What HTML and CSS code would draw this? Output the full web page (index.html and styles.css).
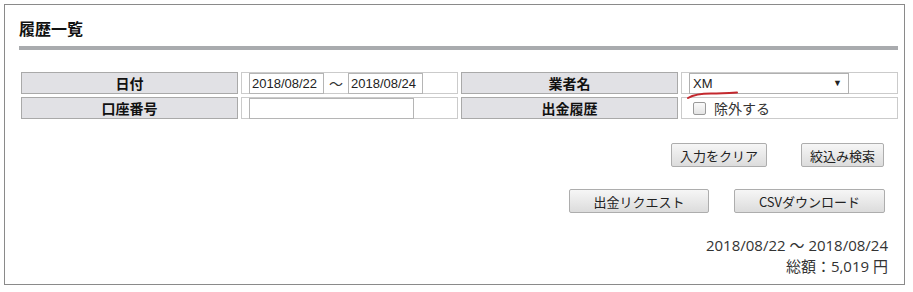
FILE: index.html
```html
<!DOCTYPE html>
<html lang="ja">
<head>
  <meta charset="UTF-8">
  <title>履歴一覧</title>
  <link rel="stylesheet" href="styles.css">
</head>
<body>

<div class="panel">
  <h2 class="panel-title">履歴一覧</h2>
  <div class="title-bar"></div>

  <!-- 検索条件 -->
  <div class="search-grid">
    <div class="label-cell">日付</div>
    <div class="value-cell">
      <input type="text" class="date-input" value="2018/08/22">
      <span class="tilde">～</span>
      <input type="text" class="date-input" value="2018/08/24">
    </div>
    <div class="label-cell">業者名</div>
    <div class="value-cell select-cell">
      <div class="select-box">
        <span>XM</span>
        <span class="arrow">▼</span>
      </div>
      <svg class="mark" width="60" height="12" viewBox="0 0 60 12">
        <path d="M3 9 C8 6, 14 4.5, 26 4.5 C36 4.5, 44 4, 52 3.5" stroke="#c3282e" stroke-width="2" fill="none" stroke-linecap="round"/>
      </svg>
    </div>

    <div class="label-cell">口座番号</div>
    <div class="value-cell">
      <input type="text" class="account-input">
    </div>
    <div class="label-cell">出金履歴</div>
    <div class="value-cell">
      <label class="check-label"><span class="checkbox"></span>除外する</label>
    </div>
  </div>

  <div class="btn-row first">
    <button class="btn btn-clear">入力をクリア</button>
    <button class="btn btn-search">絞込み検索</button>
  </div>
  <div class="btn-row second">
    <button class="btn btn-request">出金リクエスト</button>
    <button class="btn btn-csv">CSVダウンロード</button>
  </div>

  <div class="summary">
    <div>2018/08/22 ～ 2018/08/24</div>
    <div>総額：5,019 円</div>
  </div>
</div>

</body>
</html>
```

FILE: styles.css
```css
body {
  margin: 0;
  background: #fff;
  color: #222;
  font-family: "Noto Sans CJK JP", "Liberation Sans", sans-serif;
}
.panel {
  margin: 4px;
  width: 901px;
  height: 281px;
  border: 1px solid #8a8a8a;
  padding: 0 20px 0 14px;
  box-sizing: border-box;
}
.panel-title {
  margin: 0;
  padding-top: 12px;
  font-size: 16px;
  line-height: 22px;
  font-weight: bold;
  color: #111;
}
.title-bar {
  margin-top: 7px;
  height: 4px;
  width: 879px;
  background: #a9abae;
}
.search-grid {
  display: grid;
  grid-template-columns: repeat(4, 217px);
  grid-auto-rows: 22px;
  gap: 3px;
  margin: 22px 0 0 2px;
}
.label-cell {
  background: #e1e1e5;
  border: 1px solid #a9a9a9;
  font-size: 14px;
  font-weight: bold;
  text-align: center;
  line-height: 20px;
  color: #111;
}
.value-cell {
  border: 1px solid #cbcbcb;
  display: flex;
  align-items: center;
  padding-left: 7px;
  font-size: 14px;
}
.select-cell {
  position: relative;
}
.date-input {
  width: 75px;
  height: 21px;
  box-sizing: border-box;
  border: 1px solid #b5b5b5;
  padding: 0 2px;
  font-family: "Liberation Sans", sans-serif;
  font-size: 13px;
  color: #222;
}
.tilde {
  width: 24px;
  text-align: center;
  color: #333;
}
.account-input {
  width: 165px;
  height: 21px;
  box-sizing: border-box;
  border: 1px solid #b5b5b5;
}
.select-box {
  width: 160px;
  height: 21px;
  box-sizing: border-box;
  border: 1px solid #b0b0b0;
  display: flex;
  justify-content: space-between;
  align-items: center;
  padding: 0 6px 0 3px;
  font-family: "Liberation Sans", sans-serif;
  font-size: 13px;
  color: #222;
}
.arrow {
  font-size: 9px;
}
.mark {
  position: absolute;
  left: 3px;
  top: 16px;
}
.check-label {
  display: flex;
  align-items: center;
  color: #333;
}
.checkbox {
  width: 11px;
  height: 11px;
  border: 1px solid #9a9a9a;
  border-radius: 2px;
  background: linear-gradient(#fafafa, #e4e4e4);
  margin: 0 8px 0 4px;
}
.btn-row {
  display: flex;
  justify-content: flex-end;
}
.btn-row.first {
  margin-top: 24px;
  gap: 34px;
}
.btn-row.second {
  margin-top: 22px;
  gap: 25px;
  margin-right: -1px;
}
.btn {
  height: 24px;
  border: 1px solid #adadad;
  border-radius: 2px;
  background: linear-gradient(#f6f6f6, #dcdcdc);
  font-family: "Noto Sans CJK JP", "Liberation Sans", sans-serif;
  font-size: 13px;
  color: #222;
  padding: 0;
}
.btn-clear { width: 96px; }
.btn-search { width: 83px; }
.btn-request { width: 140px; }
.btn-csv { width: 151px; }
.summary {
  margin: 22px -4px 0 0;
  text-align: right;
  font-family: "Open Sans", "Noto Sans CJK JP", sans-serif;
  font-size: 15px;
  line-height: 21px;
  color: #333;
}
```
